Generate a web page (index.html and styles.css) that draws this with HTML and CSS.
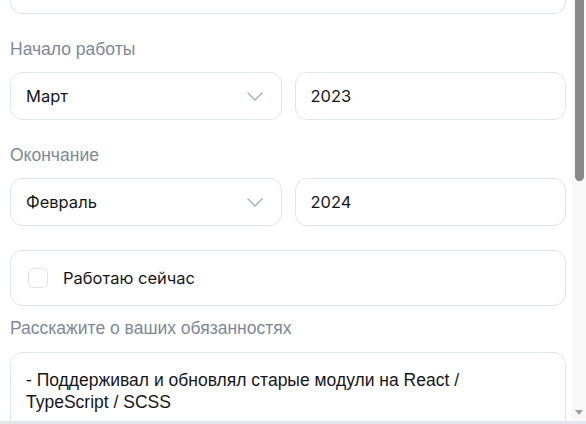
FILE: index.html
```html
<!DOCTYPE html>
<html lang="ru">
<head>
<meta charset="utf-8">
<title>Опыт работы</title>
<link rel="stylesheet" href="styles.css">
</head>
<body>
<div class="window">
  <div class="screen">
    <main class="viewport">
      <div class="card card--cut"></div>

      <div class="label label--first">Начало работы</div>
      <div class="pair">
        <div class="control control--select">
          <span class="value">Март</span>
          <svg class="chevron" width="16" height="9" viewBox="0 0 16 9"><path d="M1 1l7 7 7-7" fill="none" stroke="#a3adbb" stroke-width="1.4" stroke-linecap="round" stroke-linejoin="round"/></svg>
        </div>
        <div class="control"><span class="value">2023</span></div>
      </div>

      <div class="label">Окончание</div>
      <div class="pair">
        <div class="control control--select">
          <span class="value">Февраль</span>
          <svg class="chevron" width="16" height="9" viewBox="0 0 16 9"><path d="M1 1l7 7 7-7" fill="none" stroke="#a3adbb" stroke-width="1.4" stroke-linecap="round" stroke-linejoin="round"/></svg>
        </div>
        <div class="control"><span class="value">2024</span></div>
      </div>

      <label class="card check">
        <span class="check__box"></span>
        <span class="value">Работаю сейчас</span>
      </label>

      <div class="label label--tight">Расскажите о ваших обязанностях</div>
      <div class="card textarea">- Поддерживал и обновлял старые модули на React /
TypeScript / SCSS</div>
    </main>
    <div class="scrollbar">
      <div class="scrollbar__thumb"></div>
      <div class="scrollbar__arrow"></div>
    </div>
  </div>
  <div class="bottom-edge"></div>
</div>
</body>
</html>
```

FILE: styles.css
```css
* { box-sizing: border-box; }

html, body {
  margin: 0;
  padding: 0;
  background: #ffffff;
}

.window {
  width: 586px;
  height: 424px;
  display: flex;
  flex-direction: column;
  overflow: hidden;
}

.screen {
  height: 421px;
  display: flex;
  flex-direction: row;
}

.viewport {
  flex: 1;
  overflow: hidden;
  padding: 0 6px 0 10px;
  display: flex;
  flex-direction: column;
}

.card {
  border: 1px solid #e1e5ed;
  border-radius: 12px;
  background: #fff;
}

.card--cut {
  height: 14px;
  flex: none;
  border-top: none;
  border-radius: 0 0 12px 12px;
}

.label {
  font-family: "Liberation Sans", Arial, sans-serif;
  font-size: 17.5px;
  line-height: 20px;
  color: #7d8999;
  margin: 25px 0 13px;
}

.label--tight {
  margin: 12px 0 14px;
}

.pair {
  display: flex;
  gap: 13px;
  flex: none;
}

.control {
  flex: 1;
  height: 48px;
  border: 1px solid #e1e5ed;
  border-radius: 12px;
  display: flex;
  align-items: center;
  justify-content: space-between;
  padding: 0 18px 0 15px;
}

.value {
  font-family: Inter, "Noto Sans", sans-serif;
  font-size: 16.5px;
  color: #16161a;
}

.chevron { display: block; }

.check {
  margin-top: 24px;
  height: 56px;
  flex: none;
  display: flex;
  align-items: center;
  gap: 15px;
  padding: 0 17px;
}

.check__box {
  width: 20px;
  height: 20px;
  border: 1px solid #dfe3ea;
  border-radius: 5px;
  flex: none;
}

.textarea {
  flex: none;
  height: 140px;
  padding: 16px 15px;
  font-family: "Liberation Sans", Arial, sans-serif;
  font-size: 17.5px;
  line-height: 22px;
  color: #16161a;
  white-space: pre-wrap;
}

.scrollbar {
  width: 14px;
  flex: none;
  background: #f8f8f8;
  display: flex;
  flex-direction: column;
  justify-content: space-between;
  align-items: flex-start;
  padding: 0 2px 6px 3px;
}

.scrollbar__thumb {
  width: 9px;
  height: 181px;
  background: #888888;
  border-radius: 0 0 5px 5px;
}

.scrollbar__arrow {
  width: 0;
  height: 0;
  border-left: 4.5px solid transparent;
  border-right: 4.5px solid transparent;
  border-top: 5px solid #a0a0a0;
}

.bottom-edge {
  height: 3px;
  background: #e3e6eb;
}
```
